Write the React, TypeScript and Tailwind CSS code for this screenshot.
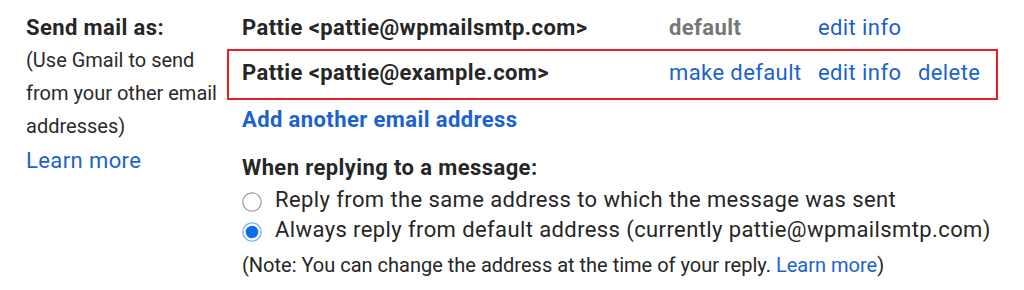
const blue = "text-[#1a62d2]";

function Radio({ checked }: { checked?: boolean }) {
  return (
    <svg width="20" height="20" viewBox="0 0 20 20" className="shrink-0 mt-[3px]">
      {checked ? (
        <>
          <circle cx="10" cy="10" r="9.2" fill="#fff" stroke="#7fb0f5" strokeWidth="1.3" />
          <circle cx="10" cy="10" r="6.3" fill="#0b6cf0" />
        </>
      ) : (
        <circle cx="10" cy="10" r="9.2" fill="#fff" stroke="#a0a0a0" strokeWidth="1.2" />
      )}
    </svg>
  );
}

export default function App() {
  return (
    <div className="w-[1024px] h-[290px] bg-white text-[#262626] pl-[26px] pt-[11px] flex font-['Roboto',sans-serif]">
      {/* left label */}
      <div className="w-[216px] shrink-0">
        <div className="text-[22px] tracking-[0.4px] leading-[33px] font-bold">Send mail as:</div>
        <div className="text-[20px] leading-[33px] text-[#2a2a2a]">
          (Use Gmail to send
          <br />
          from your other email
          <br />
          addresses)
        </div>
        <div className={`mt-[1px] text-[22px] tracking-[0.4px] leading-[33px] ${blue}`}>Learn more</div>
      </div>

      {/* right content */}
      <div className="flex flex-col text-[22px] tracking-[0.4px]">
        <div className="flex leading-[33px]">
          <div className="w-[427px] font-bold">Pattie &lt;pattie@wpmailsmtp.com&gt;</div>
          <div className="w-[149px] font-bold text-[#777]">default</div>
          <div className={blue}>edit info</div>
        </div>

        <div className="mt-[5px] -ml-[15px] w-[771px] h-[51px] border-2 border-[#ec1c24] pl-[13px] pt-[5px] flex leading-[33px]">
          <div className="w-[427px] font-bold">Pattie &lt;pattie@example.com&gt;</div>
          <div className={`w-[149px] ${blue}`}>make default</div>
          <div className={`w-[100px] ${blue}`}>edit info</div>
          <div className={blue}>delete</div>
        </div>

        <div className={`mt-[3px] leading-[33px] font-bold ${blue}`}>Add another email address</div>

        <div className="mt-[15px] leading-[33px] font-bold">When replying to a message:</div>

        <div className="flex items-center gap-[13px] leading-[30px] mt-[1px]">
          <Radio />
          <span>Reply from the same address to which the message was sent</span>
        </div>
        <div className="flex items-center gap-[13px] leading-[30px]">
          <Radio checked />
          <span>Always reply from default address (currently pattie@wpmailsmtp.com)</span>
        </div>
        <div className="text-[20px] tracking-normal leading-[30px] mt-[5px]">
          (Note: You can change the address at the time of your reply. <span className={blue}>Learn more</span>)
        </div>
      </div>
    </div>
  );
}
